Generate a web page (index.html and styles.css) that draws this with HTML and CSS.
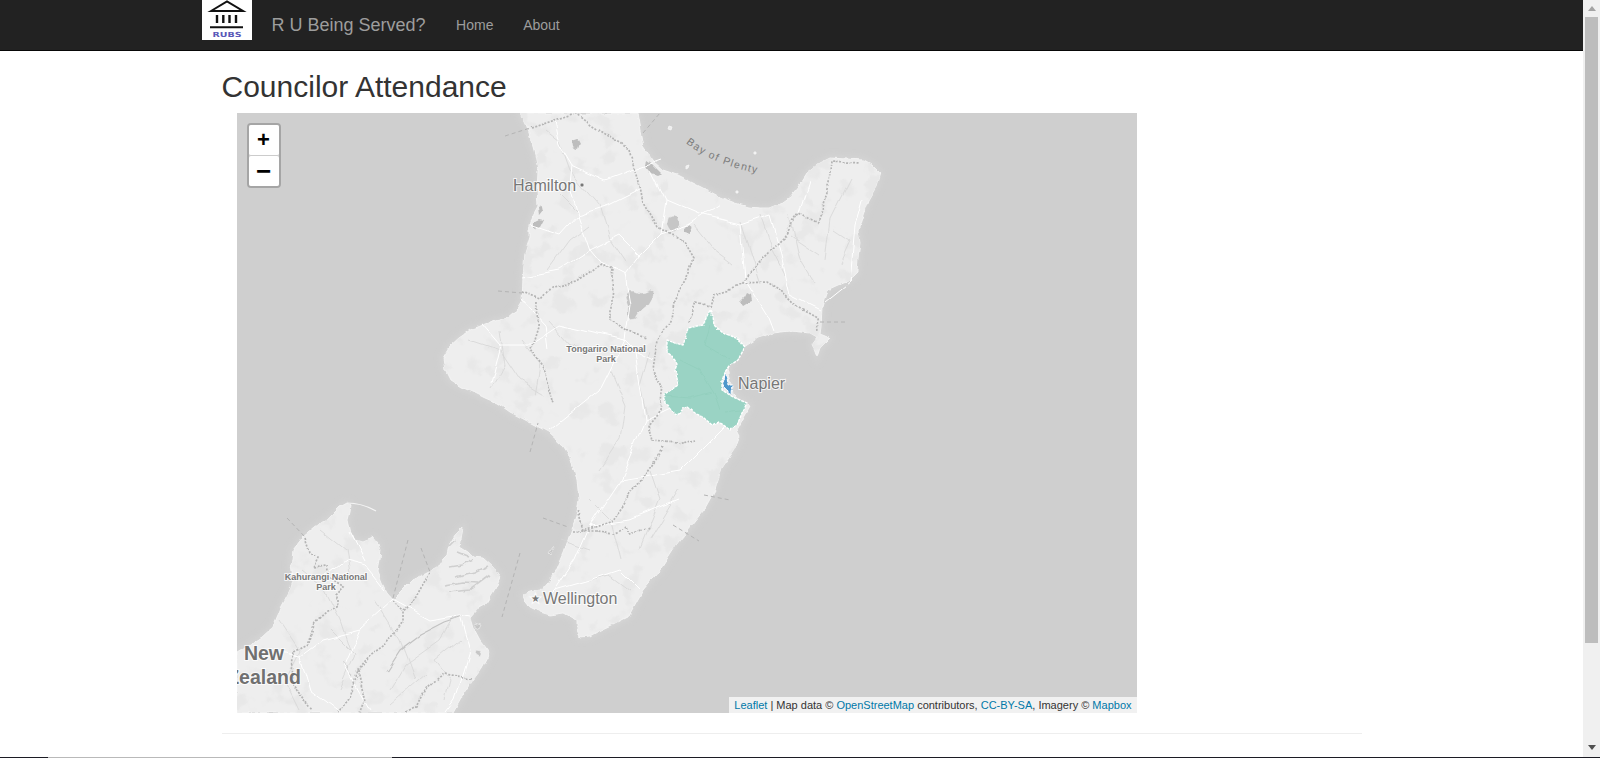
FILE: index.html
```html
<!DOCTYPE html>
<html lang="en">
<head>
<meta charset="utf-8">
<title>R U Being Served?</title>
<link rel="stylesheet" href="styles.css">
</head>
<body>
<div class="viewport">
  <div class="main">
    <nav class="navbar">
      <div class="nav-inner">
        <a class="logo" href="#">
          <svg width="50" height="40" viewBox="0 0 50 40">
            <path d="M9 11 25 1.500 41 11Z" fill="#fff" stroke="#111" stroke-width="2"/>
            <path d="M15 15v8M21.300 15v8M27.500 15v8M34 15v8" stroke="#111" stroke-width="2.400"/>
            <path d="M8 27.200h33" stroke="#111" stroke-width="2"/>
            <text class="logo-text" x="25" y="36.500" text-anchor="middle" textLength="29" lengthAdjust="spacingAndGlyphs">RUBS</text>
          </svg>
        </a>
        <a class="brand" href="#">R U Being Served?</a>
        <ul class="nav-links">
          <li><a href="#">Home</a></li>
          <li><a href="#">About</a></li>
        </ul>
      </div>
    </nav>
    <div class="container">
      <h2 class="title">Councilor Attendance</h2>
      <div class="map">
        <svg class="map-svg" width="900" height="600" viewBox="237 113 900 600">
          <defs>
            <filter id="soft" x="-10%" y="-10%" width="120%" height="120%"><feGaussianBlur stdDeviation="3"/></filter>
            <filter id="rough" filterUnits="userSpaceOnUse" x="237" y="113" width="900" height="600" color-interpolation-filters="sRGB">
              <feTurbulence type="fractalNoise" baseFrequency=".09" numOctaves="3" seed="4" result="n"/>
              <feDisplacementMap in="SourceGraphic" in2="n" scale="5" xChannelSelector="R" yChannelSelector="G"/>
            </filter>
            <filter id="wiggle" filterUnits="userSpaceOnUse" x="237" y="113" width="900" height="600" color-interpolation-filters="sRGB">
              <feTurbulence type="fractalNoise" baseFrequency=".035" numOctaves="2" seed="9" result="n"/>
              <feDisplacementMap in="SourceGraphic" in2="n" scale="9" xChannelSelector="R" yChannelSelector="G"/>
            </filter>
            <filter id="edge" filterUnits="userSpaceOnUse" x="237" y="113" width="900" height="600" color-interpolation-filters="sRGB">
              <feTurbulence type="fractalNoise" baseFrequency=".14" numOctaves="2" seed="2" result="n"/>
              <feDisplacementMap in="SourceGraphic" in2="n" scale="3" xChannelSelector="R" yChannelSelector="G"/>
            </filter>
            <filter id="mottle" filterUnits="userSpaceOnUse" x="237" y="113" width="900" height="600" color-interpolation-filters="sRGB">
              <feTurbulence type="fractalNoise" baseFrequency=".045" numOctaves="3" seed="7"/>
              <feColorMatrix type="matrix" values="0 0 0 0 .905  0 0 0 0 .905  0 0 0 0 .905  1.600 0 0 0 -.3"/>
              <feComponentTransfer><feFuncA type="table" tableValues="0 0 0 0 0 .1 .7 .9 .9"/></feComponentTransfer>
            </filter>
            <path id="north" d="M520 113 L526 125 530 137 535 155 538 170 537 190 538 207 533 216 530 225 530 237 525 253 523 277 522 300 515 312 508 318 495 321 483 325 470 330 460 337 450 346 443 358 445 370 450 380 461 387 473 392 485 398 497 403 510 412 531 423 548 432 562 445 571 459 577 480 579 500 576 517 571 531 564 552 556 571 548 582 541 590 530 592 523 595 526 602 530 607 540 612 550 615 564 613 577 620 577 630 580 637 590 636 597 632 612 625 628 617 643 590 660 570 676 545 692 525 704 510 715 490 722 468 735 449 740 436 737 430 745 415 750 406 740 400 733 393 732 387 729 378 727 370 733 358 743 347 757 338 773 333 790 331 810 333 817 337 812 344 817 357 820 348 830 338 820 334 821 327 822 307 827 290 838 285 850 280 857 273 858 258 860 243 858 230 862 217 868 200 876 186 880 173 872 165 863 160 848 159 830 158 820 163 807 173 798 187 790 197 780 204 770 208 760 208 750 207 735 203 720 197 703 188 687 180 675 174 663 170 652 160 643 147 640 130 637 113Z"/>
            <path id="south" d="M237 653 250 645 262 637 273 627 282 605 290 590 293 580 291 565 293 550 303 537 315 527 330 517 340 507 347 503 350 505 349 512 347 520 350 533 356 540 363 542 373 538 378 544 380 550 379 560 377 570 382 583 387 593 393 600 403 590 413 580 425 574 437 568 442 560 447 555 449 545 455 535 463 527 460 547 468 552 473 557 483 558 493 567 500 577 495 590 487 603 478 608 470 617 473 627 480 640 490 653 482 668 473 680 462 697 453 713 237 713Z"/>
            <clipPath id="landclip"><use href="#north"/><use href="#south"/></clipPath>
          </defs>
          <rect x="237" y="113" width="900" height="600" class="sea"/>
          <use href="#north" class="halo" filter="url(#soft)"/>
          <use href="#south" class="halo" filter="url(#soft)"/>
          <path class="halo-fine" d="M347 503Q362 503 376 511"/>

          <g filter="url(#rough)">
            <use href="#north" class="land"/>
            <use href="#south" class="land"/>
            <g clip-path="url(#landclip)">
              <rect x="237" y="113" width="900" height="600" filter="url(#mottle)"/>
            </g>
            <path class="sound" d="M445 585 462 582 478 583M448 592 470 590 490 575M450 567 462 565 472 560M455 577 475 572 488 566M447 548 455 540M458 552 468 556"/>
            <path class="darkpatch" d="M572 141l6-2 2 4-2 6-5-2zM646 160l6 4 10 10-4 2-8-3-5-6zM538 208l4-2 1 5-4 5zM534 222l6-3 4 1-3 6-7 4zM684 228l5-3 4 3-3 6-6-2zM740 302l5-5 2-4 4 2 1 5-5 2-5 3z"/>
            <path class="lake" d="M625 296l4-5 6 0 5 2 6-1 5-2 3 1-1 6-4 7-6 5-5 5-3 5-6 1-2-5 1-8-2-6zM668 218l5-2 5 1 2 5-2 6-4 3-4-2-3-6z"/>
            <path class="lake" d="M345 660l4 12 4 3-2 1-5-8-2-7zM475 623l6 2-2 4-4-2zM477 650l5 1-2 5-4-2zM548 553l5-7 1 2-4 7z"/>
          </g>
          <path class="land" d="M669 126l3 1-1 3-3-1zM686 166l3-1-1 3-2 1zM754 152l2 0 0 2-2 0zM736 191l2 0 0 2-2 0z"/>

          <g filter="url(#wiggle)">
            <g class="rivers">
              <path d="M545 130 560 142 570 170 600 205 610 240 625 262M548 270 570 240 590 225M560 195 580 215"/>
              <path d="M740 222 752 260 760 285M760 215 772 250 785 275M790 215 800 260 815 285M695 225 715 250 735 265M850 180 830 220 825 260"/>
              <path d="M835 230 850 240 840 262M790 235 820 255M470 340 500 350 520 380 545 395M500 330 505 365 490 390M548 320 570 345 600 350M520 340 540 365 535 395"/>
              <path d="M610 370 625 405 620 440 600 470M650 350 640 385 650 430M590 500 610 520 620 560M650 470 660 500 640 550M680 490 650 540M590 580 610 575 630 590M560 540 590 550"/>
              <path d="M300 570 325 590 340 620 350 650M320 530 345 550 350 580M280 620 300 650 285 680 300 710M375 600 400 640 415 680M455 615 440 640 405 665 390 690M460 640 435 660 450 680 445 700M425 675 390 705M330 630 355 655 340 690"/>
            </g>
            <g class="roads">
              <path d="M555 120 560 145 572 165 570 185 578 215 590 250 600 262 625 275 640 255 660 235 665 200 650 170M572 165 605 180 632 170 660 160M578 215 610 205 640 190M590 250 620 235 640 255"/>
              <path d="M530 225 560 235 578 215M523 277 560 270 590 250M625 275 630 305 625 340 635 350 655 360M660 235 690 225 720 205M665 200 700 215 740 225 770 215M740 225 745 280 770 320 775 333M770 215 780 250 790 295 820 310M800 213 810 180M825 300 850 280 855 225 862 200"/>
              <path d="M483 325 500 345 490 385M500 345 530 345 560 325 625 340M522 300 545 325 548 350M550 430 600 390 625 340M635 350 645 420 620 480 590 525 575 560 555 590 545 600M620 480 680 470 710 440 730 420M700 395 665 410 645 420M590 525 630 520 680 500M555 590 590 580 620 570 640 590"/>
              <path d="M393 600 360 630 320 640 300 655 275 650M360 630 345 665 370 710M393 600 430 620 460 615 470 617M320 580 345 560 365 565 385 590M300 655 310 690 340 713M460 615 470 650 455 700 445 713M350 533 365 562"/>
            </g>
            <path class="highway" d="M387 670 400 650 420 635 445 622 463 616"/>
            <g class="boundaries">
              <path d="M630 150 638 177 643 203 657 227 670 235 683 240 693 257 688 273 673 300 670 317 657 340 653 370 663 387 660 410 648 425 652 442 676 444 695 440"/>
              <path d="M663 449 633 490 612 520 582 530 577 510M690 323 697 303 710 307 713 293 730 288 742 283 763 257 783 237 800 213 817 222 830 183 832 160 860 162M742 283 767 282 780 290 797 307 817 318 818 332"/>
              <path d="M523 293 542 300 553 287 577 282 603 265 613 270 610 297 610 320 627 330 647 337M538 303 537 327 530 350 547 373 555 403M575 113 590 125 630 150M530 128 575 113"/>
              <path d="M305 537 310 552 318 557 313 568 328 566 330 577 345 587 337 595 337 608 327 612 315 623 307 643 293 650 292 683 313 710M393 602 402 612 402 623 387 643 370 655 358 670 350 697 337 712M430 573 413 603 402 612M358 670 365 700 360 713M470 677 443 673 427 687 417 707 407 713M573 530 597 530 613 532 627 527 630 535 650 530"/>
            </g>
          </g>
          <g class="seadash">
            <path d="M505 136 530 128M643 133 660 113M498 291 522 293M820 322 848 322"/>
            <path d="M287 518 305 537M408 540 393 598M421 548 430 572M520 553 502 617M543 518 568 527"/>
            <path d="M530 452 538 423M704 495 730 500M673 525 699 541"/>
          </g>

          <g filter="url(#edge)">
            <path class="region teal" d="M710 310 713 316 714 325 723 333 737 338 745 347 738 360 729 366 725 372 722 381 722 390 733 397 740 400 747 403 742 413 738 423 730 430 722 424 718 422 712 425 704 418 695 413 687 407 683 409 678 415 671 410 665 403 663 395 671 390 678 385 677 378 675 370 677 364 673 357 667 352 667 340 675 343 683 345 686 336 688 328 703 325 707 316Z"/>
            <path class="river-teal-line" d="M710 325 705 345 730 360M680 360 700 370 715 395 720 410M665 396 690 398 712 392M740 410 725 412"/>
            <path class="region blue" d="M725 373 724 382 723 388 727 389 729 394 732 393 733 385 728 385 727 377Z"/>
          </g>

          <text class="lbl lbl-city" x="513" y="191">Hamilton</text>
          <circle class="lbl-dot" cx="582" cy="185" r="2"/>
          <text class="lbl lbl-city" x="738" y="389">Napier</text>
          <text class="lbl lbl-star" x="531" y="602">★</text>
          <text class="lbl lbl-city" x="543" y="604">Wellington</text>
          <text class="lbl lbl-park" x="606" y="352" text-anchor="middle">Tongariro National</text>
          <text class="lbl lbl-park" x="606" y="362" text-anchor="middle">Park</text>
          <text class="lbl lbl-park" x="326" y="580" text-anchor="middle">Kahurangi National</text>
          <text class="lbl lbl-park" x="326" y="590" text-anchor="middle">Park</text>
          <text class="lbl lbl-country" x="264" y="660" text-anchor="middle">New</text>
          <text class="lbl lbl-country" x="264" y="684" text-anchor="middle">Zealand</text>
          <path id="bay" class="bay-line" d="M686 143Q715 167 772 176"/>
          <text class="lbl lbl-bay"><textPath href="#bay">Bay of Plenty</textPath></text>
        </svg>
        <div class="zoom-control">
          <a class="zoom-btn zoom-in" href="#">+</a>
          <a class="zoom-btn zoom-out" href="#">−</a>
        </div>
        <div class="attribution"><a href="#">Leaflet</a> | Map data © <a href="#">OpenStreetMap</a> contributors, <a href="#">CC-BY-SA</a>, Imagery © <a href="#">Mapbox</a></div>
      </div>
      <hr class="rule">
    </div>
  </div>
  <div class="scrollbar">
    <span class="arrow arrow-up"></span>
    <span class="thumb-zone"><span class="thumb"></span></span>
    <span class="arrow arrow-down"></span>
  </div>
</div>
<div class="edge"><span class="edge-a"></span><span class="edge-b"></span><span class="edge-c"></span></div>
</body>
</html>
```
FILE: styles.css
```css
* { box-sizing: border-box; }
html, body { margin: 0; padding: 0; height: 758px; overflow: hidden; background: #fff; }
body { font-family: "Liberation Sans", Arial, sans-serif; font-size: 14px; color: #333; display: flex; flex-direction: column; }
a { text-decoration: none; }

.viewport { display: flex; height: 757px; }
.main { flex: 1; min-width: 0; overflow: hidden; }

.navbar { height: 51px; background: #222; border-bottom: 1px solid #080808; }
.nav-inner { width: 1170px; margin: 0 auto; display: flex; align-items: flex-start; }
.logo { display: block; width: 50px; height: 40px; background: #fff; margin-left: -4.5px; }
.logo svg { display: block; }
.logo-text { font: bold 7px "DejaVu Sans", sans-serif; fill: #5a58b8; }
.brand { font-size: 18px; line-height: 20px; padding: 15px; margin-left: 4.5px; color: #9d9d9d; }
.nav-links { list-style: none; display: flex; margin: 0 0 0 .5px; padding: 0; }
.nav-links a { display: block; padding: 15px 14.7px 15px 15px; line-height: 20px; color: #9d9d9d; }

.container { width: 1170px; margin: 0 auto; padding: 0 15px; }
.title { margin: 19px 0 10px; font-size: 30px; font-weight: 400; line-height: 33px; color: #333; }

.map { position: relative; width: 900px; height: 600px; margin-left: 15px; overflow: hidden; background: #cfcfcf; }
.map-svg { display: block; }
.sea { fill: #cfcfcf; }
.halo { fill: #d6d6d6; stroke: #d6d6d6; stroke-width: 4; }
.halo-fine { fill: none; stroke: #f4f4f4; stroke-width: 1.2; }
.land { fill: #eeeeee; stroke: #f6f6f6; stroke-width: .8; stroke-linejoin: round; }
.sound { fill: none; stroke: #cfcfcf; stroke-width: 1.6; }
.darkpatch { fill: #bdbdbd; }
.lake { fill: #c6c6c6; stroke: #f2f2f2; stroke-width: .6; }
.rivers { fill: none; stroke: #d6d6d6; stroke-width: .8; }
.roads { fill: none; stroke: #fff; stroke-width: 1; }
.highway { fill: none; stroke: #c2c2c2; stroke-width: 1.2; }
.river-teal-line { fill: none; stroke: #8fcdbb; stroke-width: .6; }
.region { stroke: #fff; stroke-width: 1.4; stroke-dasharray: 3 1; stroke-linejoin: round; }
.teal { fill: #9ad3c4; }
.blue { fill: #4f97cb; stroke-width: 1; }
.boundaries { fill: none; stroke: #b4b4b4; stroke-width: 1.7; stroke-dasharray: 2 1.5; }
.seadash { fill: none; stroke: #b4b4b4; stroke-width: 1; stroke-dasharray: 4 3; }
.bay-line { fill: none; stroke: none; }

.lbl { font-family: "Liberation Sans", Arial, sans-serif; fill: #777; stroke: rgba(255,255,255,.75); stroke-width: 2px; paint-order: stroke; }
.lbl-city { font-size: 16px; }
.lbl-star { font-size: 10px; font-family: "DejaVu Sans", sans-serif; }
.lbl-dot { fill: #777; stroke: #fff; stroke-width: .6; }
.lbl-park { font-size: 9px; font-weight: 700; fill: #777; }
.lbl-country { font-size: 19.500px; font-weight: 700; fill: #707070; }
.lbl-bay { font-size: 10.500px; letter-spacing: 1.300px; stroke: none; fill: #7b7b7b; }

.zoom-control { position: absolute; left: 10px; top: 10px; border: 2px solid rgba(0,0,0,.2); border-radius: 4px; background-clip: padding-box; display: flex; flex-direction: column; }
.zoom-btn { display: block; width: 30px; height: 30px; background: #fff; color: #000; text-align: center; font: bold 22px/30px "Liberation Sans", Arial, sans-serif; border-radius: 2px; }
.zoom-in { height: 31px; border-bottom: 1px solid #ccc; }
.zoom-out { font-size: 26px; }

.attribution { position: absolute; right: 0; bottom: 0; height: 16px; padding: 0 5px; background: rgba(255,255,255,.7); font-size: 11px; line-height: 16px; color: #333; white-space: nowrap; }
.attribution a { color: #0078a8; }

.rule { margin: 20px 0 0; border: 0; border-top: 1px solid #eee; }

.scrollbar { width: 17px; flex: none; background: #f0f0f0; display: flex; flex-direction: column; align-items: center; }
.arrow { flex: none; width: 0; height: 0; border-left: 4px solid transparent; border-right: 4px solid transparent; }
.arrow-up { margin: 6px 0 6px; border-bottom: 5px solid #a3a3a3; }
.arrow-down { margin: 6px 0 7px; border-top: 5px solid #505050; }
.thumb-zone { flex: 1; width: 13px; }
.thumb { display: block; width: 13px; height: 626px; background: #bdbdbd; }

.edge { display: flex; height: 1px; background: #1c1c24; }
.edge-a { width: 48px; }
.edge-b { width: 344px; background: #b9b9b9; }
.edge-c { flex: 1; }
```
